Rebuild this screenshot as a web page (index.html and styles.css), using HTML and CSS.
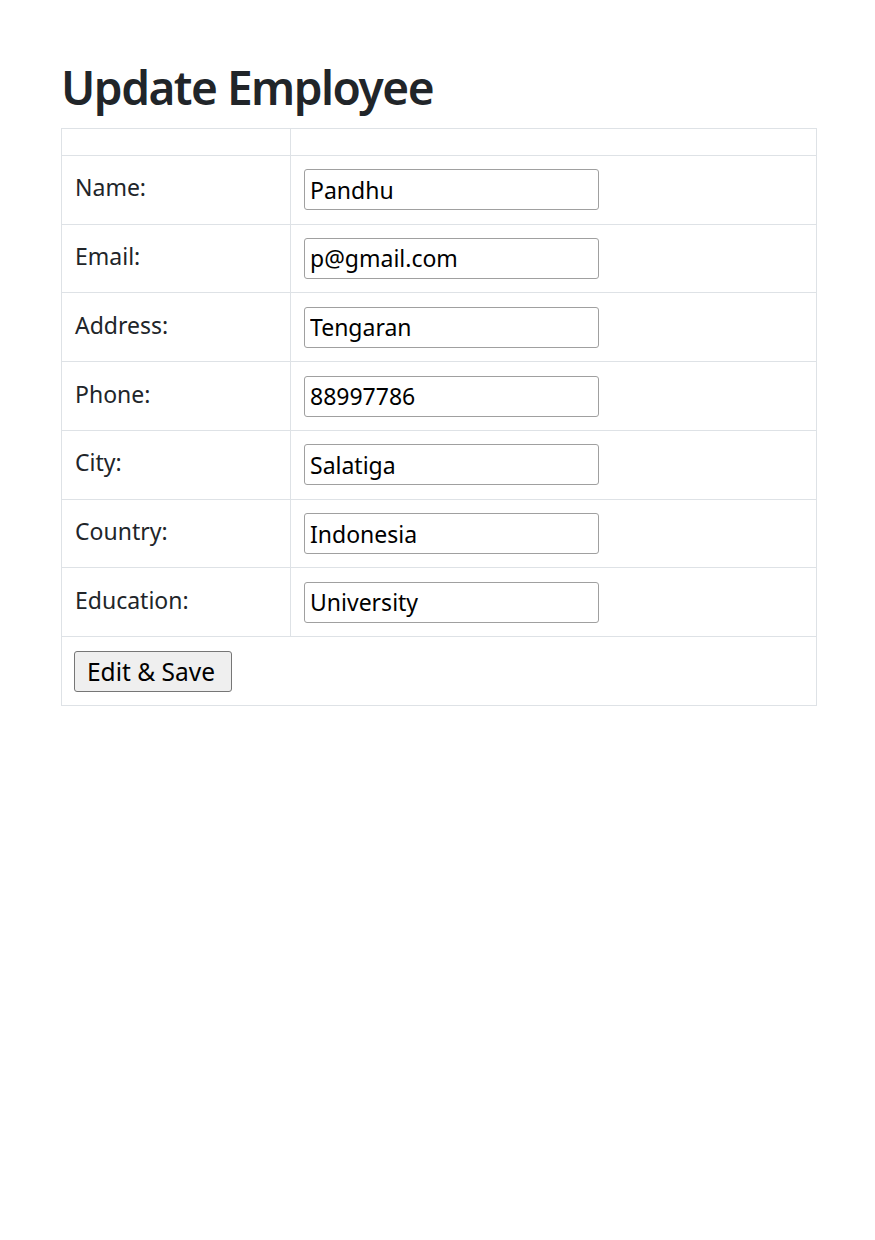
FILE: index.html
```html
<!DOCTYPE html>
<html>
<head>
<meta charset="utf-8">
<link rel="stylesheet" href="styles.css">
</head>
<body>
<div class="container">
  <h1 class="title">Update Employee</h1>
  <form>
    <table class="grid">
      <tr class="empty"><td class="col-label"></td><td></td></tr>
      <tr><td class="col-label">Name:</td><td><input class="field" type="text" value="Pandhu"></td></tr>
      <tr><td class="col-label">Email:</td><td><input class="field" type="text" value="p@gmail.com"></td></tr>
      <tr><td class="col-label">Address:</td><td><input class="field" type="text" value="Tengaran"></td></tr>
      <tr><td class="col-label">Phone:</td><td><input class="field" type="text" value="88997786"></td></tr>
      <tr><td class="col-label">City:</td><td><input class="field" type="text" value="Salatiga"></td></tr>
      <tr><td class="col-label">Country:</td><td><input class="field" type="text" value="Indonesia"></td></tr>
      <tr><td class="col-label">Education:</td><td><input class="field" type="text" value="University"></td></tr>
      <tr><td colspan="2"><button class="btn" type="button">Edit &amp; Save</button></td></tr>
    </table>
  </form>
</div>
</body>
</html>
```
FILE: styles.css
```css
html, body {
  margin: 0;
  padding: 0;
  background: #fff;
}
body {
  font-family: "Noto Sans", "Open Sans", sans-serif;
  color: #212529;
}
.container {
  padding: 60px 58px 0 61px;
}
.title {
  font-size: 46px;
  font-weight: 560;
  line-height: 1.2;
  margin: 0 0 13px 0;
  letter-spacing: -1.5px;
}
.grid {
  width: 756px;
  border-collapse: collapse;
}
.grid td {
  border: 1px solid #dee2e6;
  padding: 13.4px 13px;
  vertical-align: top;
  font-size: 23px;
  line-height: 36px;
}
.grid .col-label {
  width: 202px;
}
.grid .empty td {
  padding: 0;
  height: 25.6px;
}
.field {
  box-sizing: border-box;
  width: 295px;
  height: 41px;
  margin: 0;
  padding: 0 5px;
  font-family: "Noto Sans", sans-serif;
  font-size: 23px;
  color: #000;
  border: 1px solid #a0a0a0;
  border-radius: 3px;
  display: block;
}
.btn {
  box-sizing: border-box;
  height: 41px;
  width: 158px;
  margin: 0 0 0 -1px;
  padding: 0 0 0 12px;
  text-align: left;
  font-family: "Noto Sans", sans-serif;
  font-size: 24.5px;
  color: #000;
  background: #efefef;
  border: 1px solid #767676;
  border-radius: 3px;
  display: block;
}
```
